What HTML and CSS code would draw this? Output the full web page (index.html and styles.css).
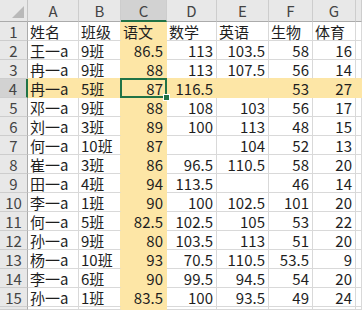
FILE: index.html
```html
<!DOCTYPE html>
<html>
<head>
<meta charset="utf-8">
<link rel="stylesheet" href="styles.css">
</head>
<body>
<div class="frame">
<div class="sheet">
  <div class="corner"><span class="tri"></span></div>
  <div class="ch">A</div><div class="ch">B</div><div class="ch sel">C</div><div class="ch">D</div><div class="ch">E</div><div class="ch">F</div><div class="ch">G</div><div class="ch"></div>

  <div class="rh">1</div><div class="c">姓名</div><div class="c fr">班级</div><div class="c fill">语文</div><div class="c">数学</div><div class="c">英语</div><div class="c">生物</div><div class="c">体育</div><div class="c"></div>
  <div class="rh">2</div><div class="c">王一a</div><div class="c fr">9班</div><div class="c n fill">86.5</div><div class="c n">113</div><div class="c n">103.5</div><div class="c n">58</div><div class="c n">16</div><div class="c"></div>
  <div class="rh">3</div><div class="c fb">冉一a</div><div class="c fr fb">9班</div><div class="c n fill">88</div><div class="c n fb">113</div><div class="c n fb">107.5</div><div class="c n fb">56</div><div class="c n fb">14</div><div class="c fb"></div>
  <div class="rh rsel">4</div><div class="c fill">冉一a</div><div class="c fill">5班</div><div class="c n fill active">87<span class="handle"></span></div><div class="c n fill">116.5</div><div class="c n fill"></div><div class="c n fill">53</div><div class="c n fill">27</div><div class="c fill"></div>
  <div class="rh">5</div><div class="c">邓一a</div><div class="c fr">9班</div><div class="c n fill">88</div><div class="c n">108</div><div class="c n">103</div><div class="c n">56</div><div class="c n">17</div><div class="c"></div>
  <div class="rh">6</div><div class="c">刘一a</div><div class="c fr">3班</div><div class="c n fill">89</div><div class="c n">100</div><div class="c n">113</div><div class="c n">48</div><div class="c n">15</div><div class="c"></div>
  <div class="rh">7</div><div class="c">何一a</div><div class="c fr">10班</div><div class="c n fill">87</div><div class="c n"></div><div class="c n">104</div><div class="c n">52</div><div class="c n">13</div><div class="c"></div>
  <div class="rh">8</div><div class="c">崔一a</div><div class="c fr">3班</div><div class="c n fill">86</div><div class="c n">96.5</div><div class="c n">110.5</div><div class="c n">58</div><div class="c n">20</div><div class="c"></div>
  <div class="rh">9</div><div class="c">田一a</div><div class="c fr">4班</div><div class="c n fill">94</div><div class="c n">113.5</div><div class="c n"></div><div class="c n">46</div><div class="c n">14</div><div class="c"></div>
  <div class="rh">10</div><div class="c">李一a</div><div class="c fr">1班</div><div class="c n fill">90</div><div class="c n">100</div><div class="c n">102.5</div><div class="c n">101</div><div class="c n">20</div><div class="c"></div>
  <div class="rh">11</div><div class="c">何一a</div><div class="c fr">5班</div><div class="c n fill">82.5</div><div class="c n">102.5</div><div class="c n">105</div><div class="c n">53</div><div class="c n">22</div><div class="c"></div>
  <div class="rh">12</div><div class="c">孙一a</div><div class="c fr">9班</div><div class="c n fill">80</div><div class="c n">103.5</div><div class="c n">113</div><div class="c n">51</div><div class="c n">20</div><div class="c"></div>
  <div class="rh">13</div><div class="c">杨一a</div><div class="c fr">10班</div><div class="c n fill">93</div><div class="c n">70.5</div><div class="c n">110.5</div><div class="c n">53.5</div><div class="c n">9</div><div class="c"></div>
  <div class="rh">14</div><div class="c">李一a</div><div class="c fr">6班</div><div class="c n fill">90</div><div class="c n">99.5</div><div class="c n">94.5</div><div class="c n">54</div><div class="c n">20</div><div class="c"></div>
  <div class="rh">15</div><div class="c">孙一a</div><div class="c fr">1班</div><div class="c n fill">83.5</div><div class="c n">100</div><div class="c n">93.5</div><div class="c n">49</div><div class="c n">24</div><div class="c"></div>
  <div class="rh"></div><div class="c"></div><div class="c fr"></div><div class="c fill"></div><div class="c"></div><div class="c"></div><div class="c"></div><div class="c"></div><div class="c"></div>
</div>
</div>
</body>
</html>
```

FILE: styles.css
```css
html, body {
  margin: 0;
  padding: 0;
  background: #ffffff;
  overflow: hidden;
}
.frame {
  width: 362px;
  height: 310px;
  overflow: hidden;
}
.sheet {
  display: grid;
  grid-template-columns: 28px 51px 42px 46px 50px 52px 44px 43px 6px;
  grid-template-rows: 22px repeat(15, 19px) 3px;
  width: 362px;
  font-family: "Noto Sans CJK SC", "Noto Sans", sans-serif;
  font-size: 15px;
  color: #1e1e1e;
}
.corner {
  background: #e8e8e8;
  border-right: 1px solid #c4c4c4;
  border-bottom: 1px solid #ababab;
  box-sizing: border-box;
  position: relative;
}
.tri {
  position: absolute;
  right: 3px;
  bottom: 3px;
  width: 0;
  height: 0;
  border-left: 12px solid transparent;
  border-bottom: 12px solid #b9b9b9;
}
.ch {
  background: #e8e8e8;
  border-right: 1px solid #cdcdcd;
  border-bottom: 1px solid #ababab;
  box-sizing: border-box;
  text-align: center;
  line-height: 22px;
  color: #444;
}
.ch.sel {
  background: #d2d2d2;
  border-bottom: 2px solid #217346;
  line-height: 21px;
}
.rh {
  background: #e8e8e8;
  border-right: 1px solid #ababab;
  border-bottom: 1px solid #cdcdcd;
  box-sizing: border-box;
  text-align: center;
  line-height: 19px;
  color: #444;
}
.rh.rsel {
  background: #d2d2d2;
  border-right: 2px solid #217346;
}
.c {
  border-right: 1px solid #d9d9d9;
  border-bottom: 1px solid #d9d9d9;
  box-sizing: border-box;
  padding: 0 2px;
  line-height: 19px;
  white-space: nowrap;
  overflow: visible;
}
.n {
  text-align: right;
  padding-right: 3px;
}
.fill {
  background: #fde6a6;
  border-color: #fde6a6;
}
.fr {
  border-right-color: #fde6a6;
}
.fb {
  border-bottom-color: #fde6a6;
}
.active {
  position: relative;
}
.active::after {
  content: "";
  position: absolute;
  left: -1px;
  top: -1px;
  right: -1px;
  bottom: -1px;
  border: 2px solid #217346;
}
.handle {
  position: absolute;
  right: -4px;
  bottom: -4px;
  width: 5px;
  height: 5px;
  background: #217346;
  border: 1px solid #ffffff;
  z-index: 2;
}
```
